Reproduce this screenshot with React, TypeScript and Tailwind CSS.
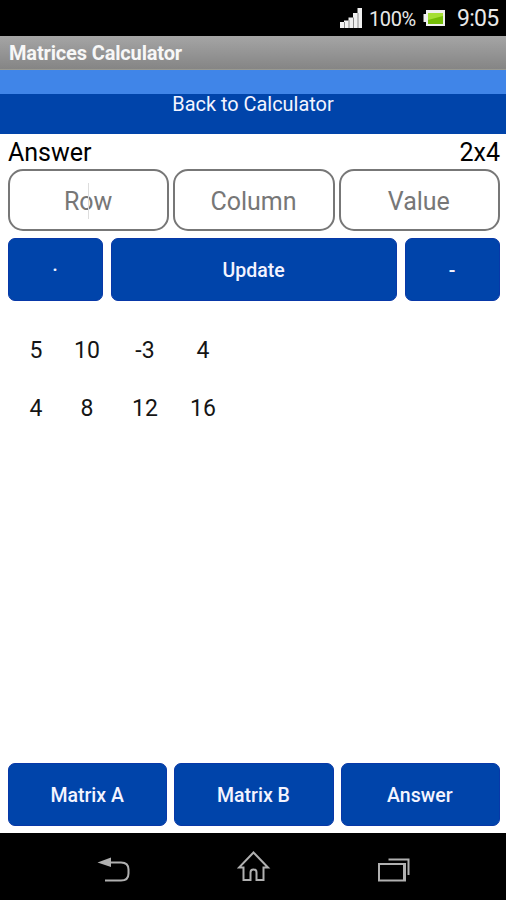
import clsx from 'clsx';
import React, { useState } from 'react';

type MatrixTab = 'Matrix A' | 'Matrix B' | 'Answer';

const tabs: MatrixTab[] = ['Matrix A', 'Matrix B', 'Answer'];

const fields = ['Row', 'Column', 'Value'];

const answer: number[][] = [
  [5, 10, -3, 4],
  [4, 8, 12, 16]
];

interface ActionButtonProps {
  label: string;
  className?: string;
  onClick?: () => void;
}

const ActionButton: React.FC<ActionButtonProps> = ({ label, className, onClick }) => (
  <button
    onClick={onClick}
    className={clsx(
      'rounded-[7px] border border-[#0838a8] bg-[#0044aa] pt-[2px] pr-px text-[19.5px] font-medium text-[#f4f4ff]',
      className
    )}
  >
    {label}
  </button>
);

const StatusBar: React.FC = () => (
  <div className="flex h-9 items-center bg-black pl-[340px] text-[#e8e8e8]">
    {/* Signal strength */}
    <svg width="23" height="21" viewBox="0 0 23 21">
      <path d="M0 14h4v6H0zM4 12.500h4.500V20H4zM8.500 9.500H13V20H8.500zM13 5h4.500v15H13zM17.500 0H22v20h-4.500z" fill="#f0f0f0" />
      <path d="M4.500 14v6M9 12v8M13.500 9.500V20M18 5v15" stroke="#8a8a8a" />
    </svg>
    <span className="ml-[6px] w-[47px] whitespace-nowrap pt-[2px] text-[20px] tracking-[-0.4px]">100%</span>
    {/* Battery */}
    <svg className="ml-[7px]" width="24" height="18" viewBox="0 0 24 18">
      <path d="M3 1h19v16H3v-4H0.500V5H3z" fill="#efefef" />
      <path d="M5 4h15v11H5z" fill="#75bd08" />
      <path d="M5 4h15v3L5 11z" fill="#a6df35" />
    </svg>
    <span className="ml-[10px] whitespace-nowrap pt-[3px] text-[23px] tracking-[-0.7px]">9:05</span>
  </div>
);

const NavBar: React.FC = () => (
  <div className="flex h-[67px] items-start justify-between bg-black pt-[17px] pr-[95px] pl-[97px]">
    <svg width="34" height="36" viewBox="0 0 34 36" fill="none" stroke="#b0b0b0" strokeWidth="2">
      <path d="M13 12.500h11q7.500 0 7.500 7v4q0 7-7.500 7H8" />
      <path d="M0.500 12.500L14 7.500v9.500z" fill="#b0b0b0" stroke="none" />
    </svg>
    <svg width="34" height="36" viewBox="0 0 34 36" fill="none" stroke="#b0b0b0" strokeWidth="2">
      <path d="M16.500 2.500L2 17.500h4.500V30h7v-7.500q0-3 3-3t3 3V30h7V17.500H31z" />
    </svg>
    <svg width="34" height="36" viewBox="0 0 34 36" fill="none" stroke="#b0b0b0" strokeWidth="2">
      <path d="M2 14h26v16.500H2z" />
      <path d="M27 14v16" />
      <path d="M11.500 9.500h20V25" />
    </svg>
  </div>
);

const App: React.FC = () => {
  const [active, setActive] = useState<MatrixTab>('Answer');

  return (
    <div className="flex h-[900px] w-[506px] flex-col overflow-hidden bg-white font-[Roboto,sans-serif] text-black">
      <StatusBar />

      <header className="h-[34px] border-b border-[#999990] bg-linear-to-b from-[#a5a5a5] to-[#858585] pl-[9px] text-[20px] leading-[34px] font-bold tracking-[-0.15px] text-[#f7f7f7]">
        Matrices Calculator
      </header>

      <button className="h-16 border-t-[24px] border-[#4085e8] bg-[#0044aa] pb-[19px] text-[19.900px] leading-[21px] text-[#f4f4ff]">
        Back to Calculator
      </button>

      <main className="flex flex-1 flex-col pr-[6px] pl-2">
        <div className="flex h-[35px] items-center justify-between pt-[2px] text-[25px] leading-[33px]">
          <h1>{active}</h1>
          <span>2x4</span>
        </div>

        <div className="grid grid-cols-3 gap-1">
          {fields.map((field) => (
            <div
              key={field}
              className="relative flex h-[62px] items-center justify-center rounded-[15px] border-2 border-[#777777] pt-[3px] pr-px text-[25px] text-[#777777]"
            >
              {field}
              {field === 'Row' && <span className="absolute top-3 left-[78px] h-9 w-px bg-[#dddddd]" />}
            </div>
          ))}
        </div>

        <div className="mt-[7px] flex h-[63px] gap-2">
          <ActionButton label="·" className="w-[95px]" />
          <ActionButton label="Update" className="flex-1" />
          <ActionButton label="-" className="w-[95px]" />
        </div>

        <table className="mt-5 ml-[13px] w-[202px] table-fixed text-center text-[23px] text-[#151515]">
          <colgroup>
            <col className="w-[30px]" />
            <col className="w-[72px]" />
            <col className="w-[44px]" />
            <col className="w-[72px]" />
          </colgroup>
          <tbody>
            {answer.map((row, i) => (
              <tr key={i} className="h-[58px]">
                {row.map((value, j) => (
                  <td key={j} className="pt-[2px]">{value}</td>
                ))}
              </tr>
            ))}
          </tbody>
        </table>

        <nav className="mt-auto mb-[7px] grid h-[63px] grid-cols-3 gap-[7px]">
          {tabs.map((tab) => (
            <ActionButton key={tab} label={tab} onClick={() => setActive(tab)} />
          ))}
        </nav>
      </main>

      <NavBar />
    </div>
  );
};

export default App;
